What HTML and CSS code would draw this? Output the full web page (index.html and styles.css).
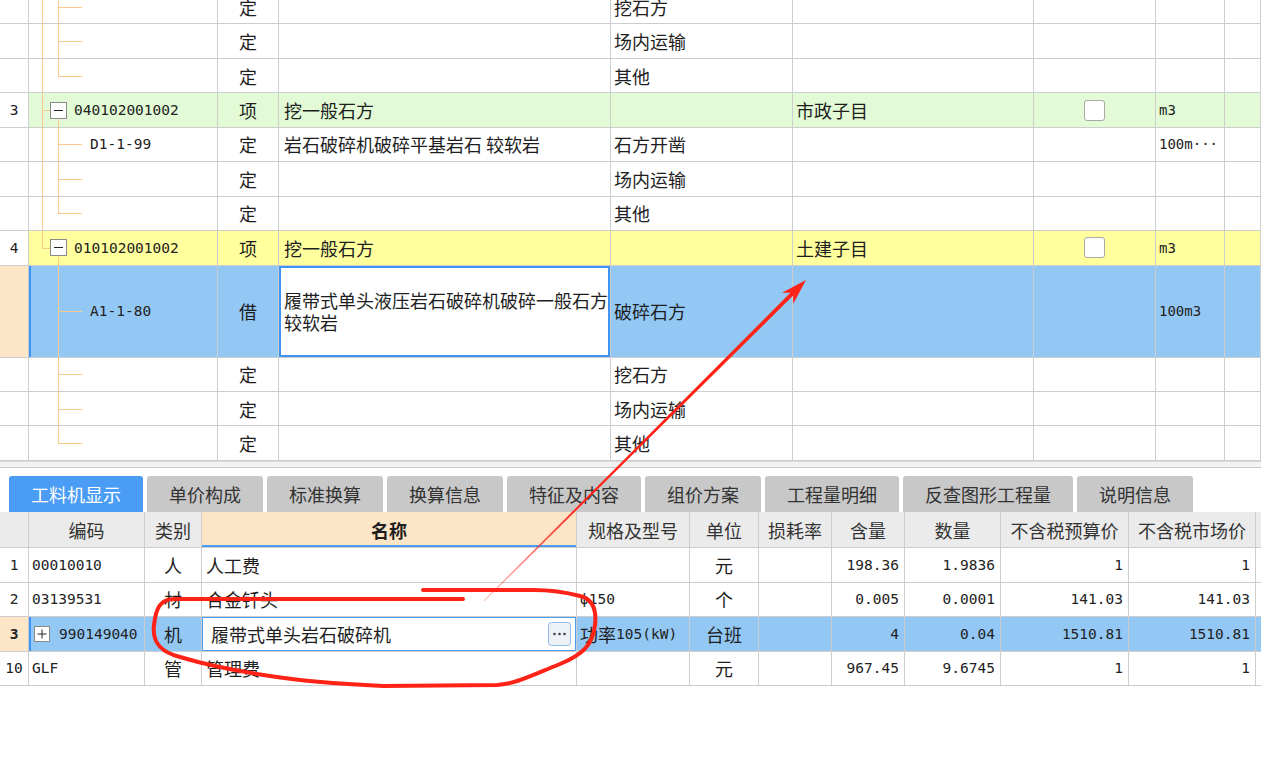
FILE: index.html
```html
<!DOCTYPE html>
<html lang="zh-CN">
<head>
<meta charset="utf-8">
<title>工料机显示</title>
<link rel="stylesheet" href="styles.css">
</head>
<body>
<div class="grid-top">
  <div class="scroll">
    <div class="tr">
      <div class="c num"></div>
      <div class="c code l2"><span class="t o-full"></span><span class="t i-full"></span><span class="t i-h"></span></div>
      <div class="c ctr">定</div>
      <div class="c"></div>
      <div class="c">挖石方</div>
      <div class="c"></div><div class="c"></div><div class="c"></div><div class="c"></div>
    </div>
    <div class="tr">
      <div class="c num"></div>
      <div class="c code l2"><span class="t o-full"></span><span class="t i-full"></span><span class="t i-h"></span></div>
      <div class="c ctr">定</div>
      <div class="c"></div>
      <div class="c">场内运输</div>
      <div class="c"></div><div class="c"></div><div class="c"></div><div class="c"></div>
    </div>
    <div class="tr">
      <div class="c num"></div>
      <div class="c code l2"><span class="t o-full"></span><span class="t i-top"></span><span class="t i-h"></span></div>
      <div class="c ctr">定</div>
      <div class="c"></div>
      <div class="c">其他</div>
      <div class="c"></div><div class="c"></div><div class="c"></div><div class="c"></div>
    </div>
    <div class="tr green">
      <div class="c num ctr"><span class="n">3</span></div>
      <div class="c code l1"><span class="t o-full"></span><span class="t o-h"></span><span class="t i-box"></span><svg class="box" viewBox="0 0 17 17"><rect x="0.5" y="0.5" width="16" height="16" fill="#fff" stroke="#8a8a8a"/><path d="M4 8.5h9" stroke="#222"/></svg><span class="n">040102001002</span></div>
      <div class="c ctr">项</div>
      <div class="c">挖一般石方</div>
      <div class="c"></div>
      <div class="c">市政子目</div>
      <div class="c ctr"><span class="chk"></span></div>
      <div class="c"><span class="n sm">m3</span></div>
      <div class="c"></div>
    </div>
    <div class="tr">
      <div class="c num"></div>
      <div class="c code l2"><span class="t o-full"></span><span class="t i-full"></span><span class="t i-h"></span><span class="n">D1-1-99</span></div>
      <div class="c ctr">定</div>
      <div class="c">岩石破碎机破碎平基岩石 较软岩</div>
      <div class="c">石方开凿</div>
      <div class="c"></div><div class="c"></div>
      <div class="c"><span class="n sm">100m···</span></div>
      <div class="c"></div>
    </div>
    <div class="tr">
      <div class="c num"></div>
      <div class="c code l2"><span class="t o-full"></span><span class="t i-full"></span><span class="t i-h"></span></div>
      <div class="c ctr">定</div>
      <div class="c"></div>
      <div class="c">场内运输</div>
      <div class="c"></div><div class="c"></div><div class="c"></div><div class="c"></div>
    </div>
    <div class="tr">
      <div class="c num"></div>
      <div class="c code l2"><span class="t o-full"></span><span class="t i-top"></span><span class="t i-h"></span></div>
      <div class="c ctr">定</div>
      <div class="c"></div>
      <div class="c">其他</div>
      <div class="c"></div><div class="c"></div><div class="c"></div><div class="c"></div>
    </div>
    <div class="tr yellow">
      <div class="c num ctr"><span class="n">4</span></div>
      <div class="c code l1"><span class="t o-top"></span><span class="t o-h"></span><span class="t i-box"></span><svg class="box" viewBox="0 0 17 17"><rect x="0.5" y="0.5" width="16" height="16" fill="#fff" stroke="#8a8a8a"/><path d="M4 8.5h9" stroke="#222"/></svg><span class="n">010102001002</span></div>
      <div class="c ctr">项</div>
      <div class="c">挖一般石方</div>
      <div class="c"></div>
      <div class="c">土建子目</div>
      <div class="c ctr"><span class="chk"></span></div>
      <div class="c"><span class="n sm">m3</span></div>
      <div class="c"></div>
    </div>
    <div class="tr tall blue">
      <div class="c num peach"></div>
      <div class="c code l2 sel"><span class="t i-full"></span><span class="t i-h"></span><span class="n">A1-1-80</span></div>
      <div class="c ctr">借</div>
      <div class="c edit"><span class="wrap">履带式单头液压岩石破碎机破碎一般石方<br>较软岩</span></div>
      <div class="c">破碎石方</div>
      <div class="c"></div><div class="c"></div>
      <div class="c"><span class="n sm">100m3</span></div>
      <div class="c"></div>
    </div>
    <div class="tr">
      <div class="c num"></div>
      <div class="c code l2"><span class="t i-full"></span><span class="t i-h"></span></div>
      <div class="c ctr">定</div>
      <div class="c"></div>
      <div class="c">挖石方</div>
      <div class="c"></div><div class="c"></div><div class="c"></div><div class="c"></div>
    </div>
    <div class="tr">
      <div class="c num"></div>
      <div class="c code l2"><span class="t i-full"></span><span class="t i-h"></span></div>
      <div class="c ctr">定</div>
      <div class="c"></div>
      <div class="c">场内运输</div>
      <div class="c"></div><div class="c"></div><div class="c"></div><div class="c"></div>
    </div>
    <div class="tr">
      <div class="c num"></div>
      <div class="c code l2"><span class="t i-top"></span><span class="t i-h"></span></div>
      <div class="c ctr">定</div>
      <div class="c"></div>
      <div class="c">其他</div>
      <div class="c"></div><div class="c"></div><div class="c"></div><div class="c"></div>
    </div>
  </div>
</div>

<div class="split"></div>

<div class="tabs">
  <div class="tab active">工料机显示</div>
  <div class="tab">单价构成</div>
  <div class="tab">标准换算</div>
  <div class="tab">换算信息</div>
  <div class="tab">特征及内容</div>
  <div class="tab">组价方案</div>
  <div class="tab">工程量明细</div>
  <div class="tab">反查图形工程量</div>
  <div class="tab">说明信息</div>
</div>

<div class="grid-bot">
  <div class="bh">
    <div class="c"></div>
    <div class="c ctr">编码</div>
    <div class="c ctr">类别</div>
    <div class="c ctr hname">名称</div>
    <div class="c ctr">规格及型号</div>
    <div class="c ctr">单位</div>
    <div class="c ctr">损耗率</div>
    <div class="c ctr">含量</div>
    <div class="c ctr">数量</div>
    <div class="c ctr">不含税预算价</div>
    <div class="c ctr">不含税市场价</div>
    <div class="c"></div>
  </div>
  <div class="br">
    <div class="c ctr"><span class="n">1</span></div>
    <div class="c"><span class="n">00010010</span></div>
    <div class="c ctr">人</div>
    <div class="c pn">人工费</div>
    <div class="c"></div>
    <div class="c ctr">元</div>
    <div class="c"></div>
    <div class="c rt"><span class="n">198.36</span></div>
    <div class="c rt"><span class="n">1.9836</span></div>
    <div class="c rt"><span class="n">1</span></div>
    <div class="c rt"><span class="n">1</span></div>
    <div class="c"></div>
  </div>
  <div class="br">
    <div class="c ctr"><span class="n">2</span></div>
    <div class="c"><span class="n">03139531</span></div>
    <div class="c ctr">材</div>
    <div class="c pn">合金钎头</div>
    <div class="c"><span class="n">ф150</span></div>
    <div class="c ctr">个</div>
    <div class="c"></div>
    <div class="c rt"><span class="n">0.005</span></div>
    <div class="c rt"><span class="n">0.0001</span></div>
    <div class="c rt"><span class="n">141.03</span></div>
    <div class="c rt"><span class="n">141.03</span></div>
    <div class="c"></div>
  </div>
  <div class="br blue">
    <div class="c ctr peach"><span class="n b">3</span></div>
    <div class="c sel pl"><svg class="box sm" viewBox="0 0 16 16"><rect x="0.5" y="0.5" width="15" height="15" fill="#fff" stroke="#8a8a8a"/><path d="M3.5 8h9M8 3.5v9" stroke="#222"/></svg><span class="n">990149040</span></div>
    <div class="c ctr">机</div>
    <div class="c edit1"><span class="etext">履带式单头岩石破碎机</span><svg class="dots" viewBox="0 0 23 24"><rect x="0.5" y="0.5" width="22" height="23" rx="3" fill="#edf1f8" stroke="#93bbe9"/><circle cx="6.5" cy="12" r="1.3" fill="#444"/><circle cx="11.5" cy="12" r="1.3" fill="#444"/><circle cx="16.5" cy="12" r="1.3" fill="#444"/></svg></div>
    <div class="c">功率<span class="n">105(kW)</span></div>
    <div class="c ctr">台班</div>
    <div class="c"></div>
    <div class="c rt"><span class="n">4</span></div>
    <div class="c rt"><span class="n">0.04</span></div>
    <div class="c rt"><span class="n">1510.81</span></div>
    <div class="c rt"><span class="n">1510.81</span></div>
    <div class="c"></div>
  </div>
  <div class="br">
    <div class="c ctr"><span class="n">10</span></div>
    <div class="c"><span class="n">GLF</span></div>
    <div class="c ctr">管</div>
    <div class="c pn">管理费</div>
    <div class="c"></div>
    <div class="c ctr">元</div>
    <div class="c"></div>
    <div class="c rt"><span class="n">967.45</span></div>
    <div class="c rt"><span class="n">9.6745</span></div>
    <div class="c rt"><span class="n">1</span></div>
    <div class="c rt"><span class="n">1</span></div>
    <div class="c"></div>
  </div>
</div>

<svg class="marks" width="1261" height="766" viewBox="0 0 1261 766">
  <defs>
    <linearGradient id="fade" gradientUnits="userSpaceOnUse" x1="484" y1="601" x2="806" y2="280">
      <stop offset="0" stop-color="#ff2418" stop-opacity="0.25"/>
      <stop offset="0.3" stop-color="#ff2418" stop-opacity="1"/>
    </linearGradient>
  </defs>
  <polygon points="483.6,600.6 790.4,292.8 782,292.7 806,280 793.2,304.1 793.2,295.6 484.4,601.4" fill="url(#fade)"/>
  <path d="M463,599 L175,599 C160,599 156,608 154,625 C152,642 160,652 180,657 C200,663 230,670 270,676 C300,681 340,684 383,686 L497,685 C515,684 530,676 560,664 C582,655 593,645 595,625 C597,608 592,599 580,596 C565,592 545,590 533,590 L423,590" fill="none" stroke="#ff2216" stroke-width="4" stroke-linejoin="round" stroke-linecap="round"/>
</svg>
</body>
</html>
```

FILE: styles.css
```css
* { box-sizing: border-box; }

body {
  margin: 0;
  width: 1261px;
  height: 766px;
  overflow: hidden;
  position: relative;
  background: #fff;
  font-family: "Noto Sans CJK SC", "Noto Sans", sans-serif;
  font-size: 18px;
  color: #1e1e1e;
}

.n {
  font-family: "DejaVu Sans Mono", "Liberation Mono", monospace;
  font-size: 14.5px;
  color: #222;
}
.n.sm { font-size: 14px; }
.n.b { font-weight: bold; }

/* ---------- upper grid ---------- */
.grid-top {
  height: 461px;
  overflow: hidden;
}
.scroll { margin-top: -10px; }

.tr {
  display: grid;
  grid-template-columns: 29px 189px 61px 332px 182px 241px 122px 69px 1fr;
  height: 34.45px;
}
.tr.tall { height: 92px; }

.c {
  display: flex;
  align-items: center;
  padding: 0 3px;
  border-right: 1px solid #cdcdcd;
  border-bottom: 1px solid #cdcdcd;
  white-space: nowrap;
  overflow: hidden;
  min-width: 0;
  line-height: 22px;
}
.ctr { justify-content: center; }
.rt { justify-content: flex-end; padding-right: 5px; }
.num { padding: 0; background: #fff; }

.tr .c:nth-child(4) { padding-left: 5px; }

.green .c { background: #e2fbd6; }
.yellow .c { background: #ffff9e; }
.blue .c { background: #93c8f5; }
.green .c.num, .yellow .c.num { background: #fff; }
.c.peach, .blue .c.peach { background: #fde5c8; }

.code { position: relative; }
.code.l1 { padding-left: 21px; }
.code.l2 { padding-left: 61px; }
.code .box { width: 17px; height: 17px; margin-right: 7px; flex: none; }

.c.sel { box-shadow: inset 2px 0 0 #3f93f2; }

.t { position: absolute; background: #fcca8c; }
.o-full { left: 13px; top: 0; bottom: -1px; width: 1px; }
.o-top { left: 13px; top: 0; height: 50%; width: 1px; }
.o-h { left: 13px; top: 50%; width: 8px; height: 1px; }
.i-full { left: 29px; top: 0; bottom: -1px; width: 1px; }
.i-top { left: 29px; top: 0; height: 50%; width: 1px; }
.i-h { left: 29px; top: 50%; width: 24px; height: 1px; }
.i-box { left: 29px; top: calc(50% + 9px); bottom: -1px; width: 1px; }

.chk {
  width: 21px;
  height: 21px;
  background: #fff;
  border: 1px solid #a9a9a9;
  border-radius: 3px;
}

.blue .c.edit {
  background: #fff;
  box-shadow: inset 0 0 0 2px #3f93f2;
  padding-left: 5px;
}
.wrap { display: block; line-height: 22px; }

/* ---------- splitter & tabs ---------- */
.split {
  height: 7px;
  background: #f2f2f2;
  border-top: 1px solid #d6d6d6;
  border-bottom: 1px solid #c9c9c9;
}

.tabs {
  display: flex;
  gap: 4px;
  padding: 8px 0 0 9px;
}
.tab {
  height: 36px;
  padding: 0 22px;
  display: flex;
  align-items: center;
  background: #c8c8c8;
  color: #333;
  border-radius: 3px 3px 0 0;
  white-space: nowrap;
}
.tab.active {
  background: #4a9cf5;
  color: #fff;
}

/* ---------- lower grid ---------- */
.bh, .br {
  display: grid;
  grid-template-columns: 29px 116px 57px 375px 113px 69px 73px 73px 96px 128px 127px 1fr;
}
.bh { height: 36px; }
.br { height: 34.5px; }

.bh .c {
  background: #ebebeb;
  color: #333;
}
.bh .c.hname {
  background: #fde5c8;
  font-weight: bold;
  color: #1e1e1e;
  box-shadow: inset 0 -2px 0 #4a9cf5;
}

.br .c { padding-left: 3px; }
.br .c.pn { padding-left: 4px; }
.br .c.pl { padding-left: 5px; }
.br .c.rt { padding-right: 5px; }
.br .box.sm { width: 16px; height: 16px; margin-right: 9px; flex: none; }

.blue .c.edit1 {
  background: #fff;
  box-shadow: inset 0 0 0 1px #4a9cf5;
  padding: 0 5px 0 9px;
}
.etext { flex: 1; }
.dots { width: 23px; height: 24px; flex: none; }

/* ---------- annotation overlay ---------- */
.marks {
  position: absolute;
  left: 0;
  top: 0;
  pointer-events: none;
}
```
